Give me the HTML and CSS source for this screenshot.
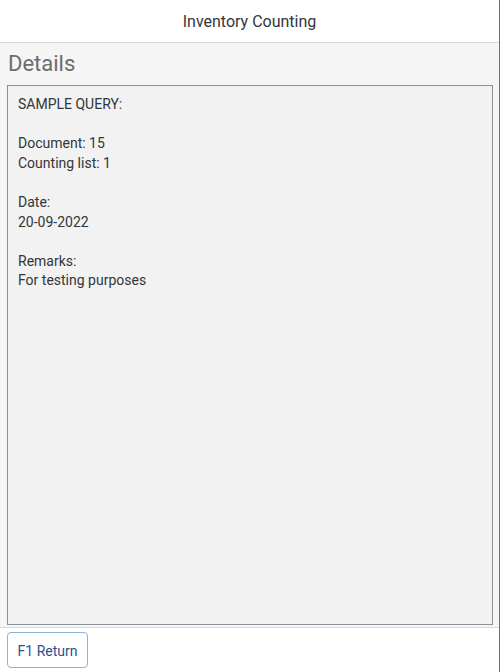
FILE: index.html
```html
<!DOCTYPE html>
<html>
<head>
<meta charset="utf-8">
<link rel="stylesheet" href="styles.css">
</head>
<body>
<div class="app">
  <header class="header">Inventory Counting</header>
  <main class="content">
    <h1 class="title">Details</h1>
    <div class="box">
      <p>SAMPLE QUERY:</p>
      <p>&nbsp;</p>
      <p>Document: 15</p>
      <p>Counting list: 1</p>
      <p>&nbsp;</p>
      <p>Date:</p>
      <p>20-09-2022</p>
      <p>&nbsp;</p>
      <p>Remarks:</p>
      <p>For testing purposes</p>
    </div>
  </main>
  <footer class="footer">
    <button class="btn">F1 Return</button>
  </footer>
</div>
</body>
</html>
```
FILE: styles.css
```css
html, body {
  margin: 0;
  padding: 0;
  background: #ffffff;
}
body {
  font-family: Roboto, "Noto Sans", sans-serif;
  color: #32363a;
}
.app {
  width: 499px;
  height: 672px;
  border-right: 1px solid #2f7fd0;
  display: flex;
  flex-direction: column;
  box-sizing: content-box;
}
.header {
  height: 42px;
  border-bottom: 1px solid #d9d9d9;
  display: flex;
  align-items: center;
  justify-content: center;
  font-size: 16px;
  padding-top: 1px;
  box-sizing: border-box;
  height: 43px;
  color: #32363a;
  background: #fff;
}
.content {
  height: 585px;
  background: #f5f5f5;
  padding: 0 6px 2px 7px;
  box-sizing: border-box;
  display: flex;
  flex-direction: column;
}
.title {
  margin: 0;
  padding: 8px 0 0 1px;
  height: 42px;
  box-sizing: border-box;
  font-size: 22px;
  font-weight: normal;
  color: #6a6d70;
  line-height: 26px;
}
.box {
  flex: 1;
  border: 1px solid #89919a;
  background: #f2f2f2;
  padding: 9px 10px 7px;
}
.box p {
  margin: 0;
  font-size: 14px;
  line-height: 19.6px;
  color: #32363a;
}
.footer {
  flex: 1;
  border-top: 1px solid #d9d9d9;
  background: #fff;
  padding: 4px 7px;
}
.btn {
  height: 36px;
  width: 81px;
  border: 1px solid #8fb0d6;
  border-radius: 4px;
  background: #fff;
  color: #2a4f8f;
  font-family: inherit;
  font-size: 14px;
  padding: 2px 0 0;
}
```
